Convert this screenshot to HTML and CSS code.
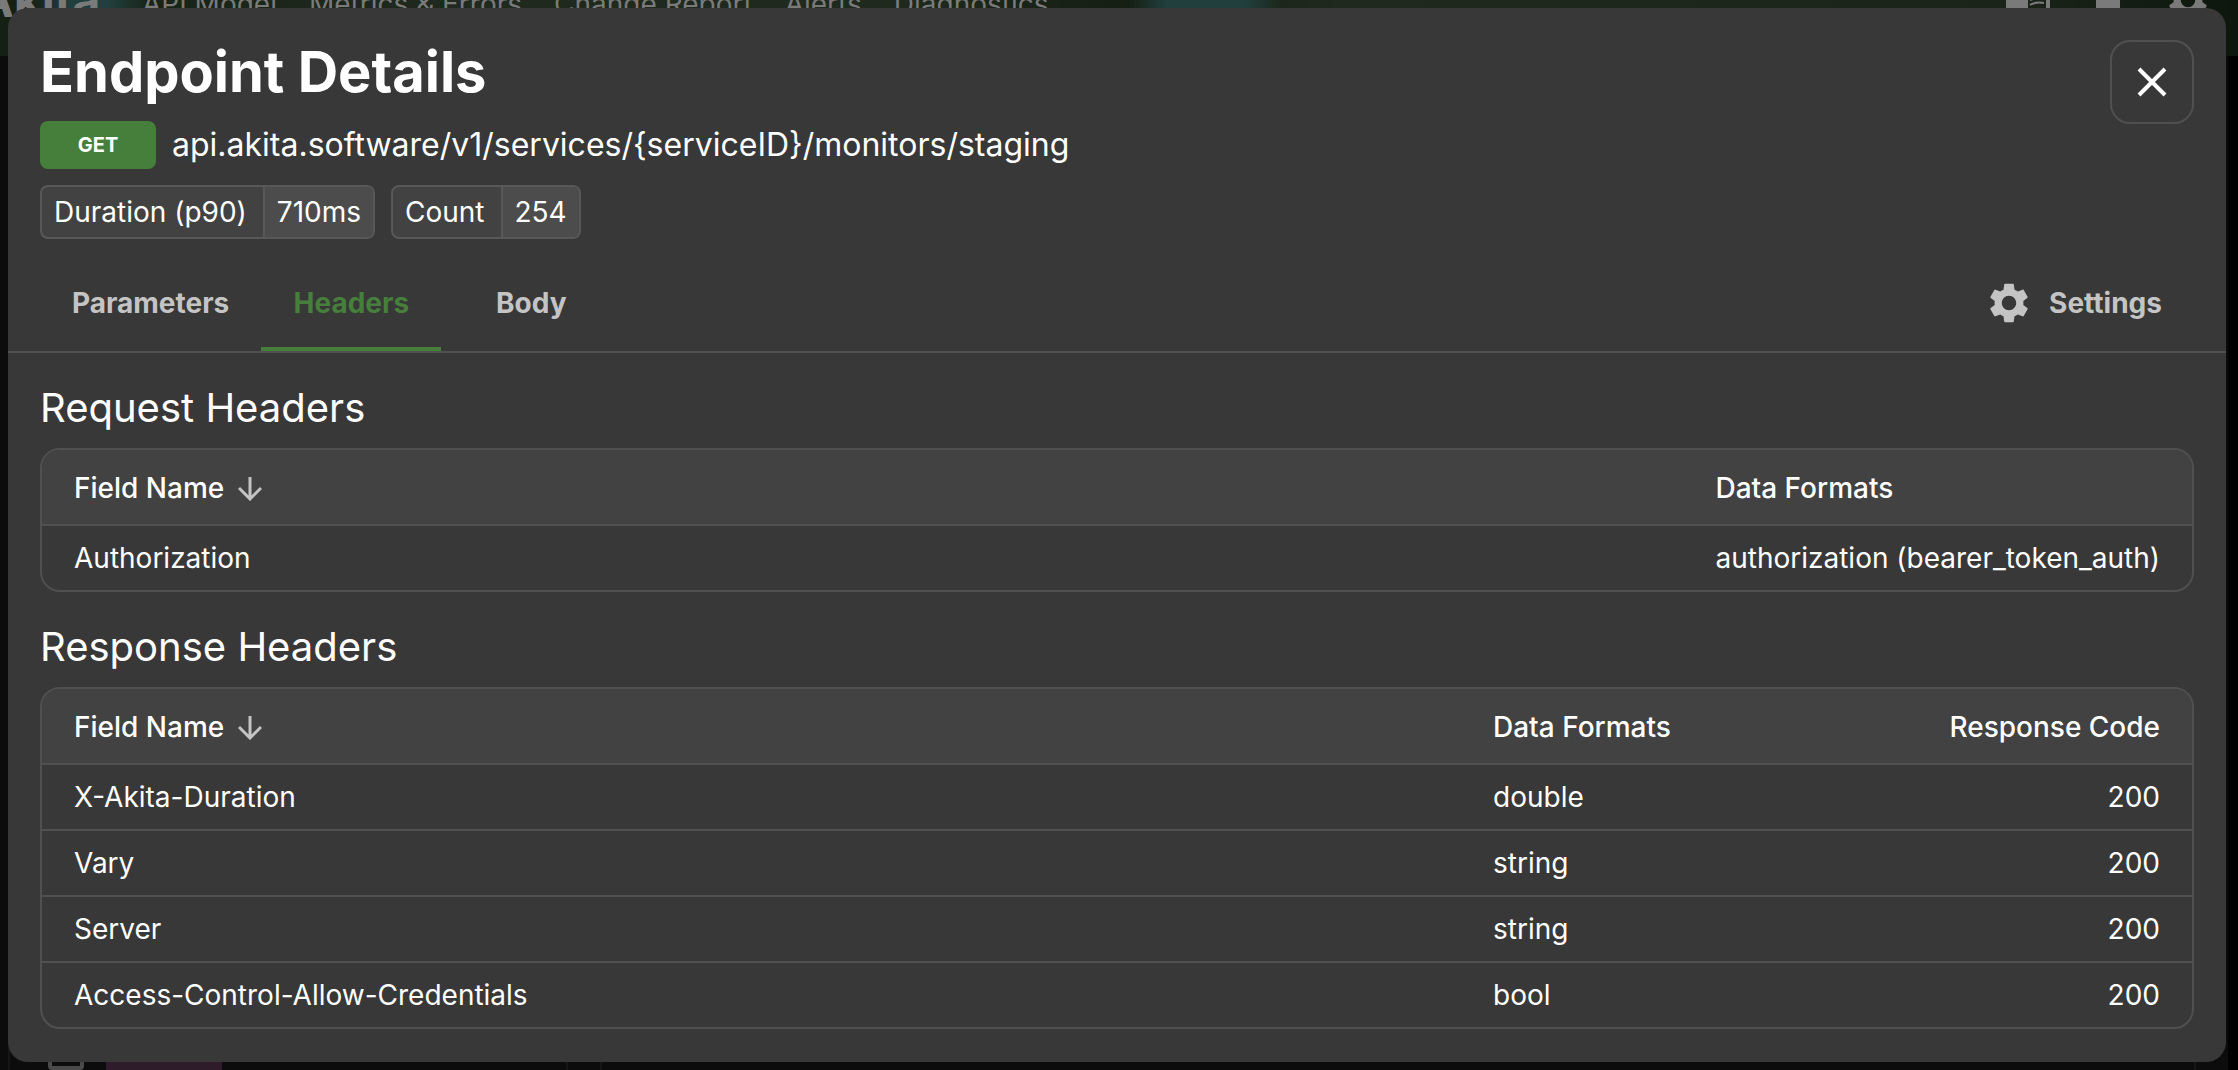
FILE: index.html
```
<!DOCTYPE html>
<html lang="en">

<head>
    <meta charset="UTF-8">
    <meta name="viewport" content="width=device-width, initial-scale=1.0">
    <title>Endpoint Details</title>
    <link rel="stylesheet" href="styles.css">
</head>

<body>
    <!-- page behind the dialog -->
    <div class="page">
        <header class="topbar">
            <span class="logo">Akita</span>
            <nav class="nav">
                <a href="#">API Model</a>
                <a href="#">Metrics &amp; Errors</a>
                <a href="#">Change Report</a>
                <a href="#">Alerts</a>
                <a href="#">Diagnostics</a>
            </nav>
            <div class="tools">
                <svg class="tool" viewBox="0 0 48 48"><path d="M2 8h22v32H2zM26 8h14v12H26zM42 8h4v32h-4z"/><path class="page-lines" d="M26 24c5-2 9-2 14-1M26 29c5-3 9-3 14-2"/></svg>
                <svg class="tool" viewBox="0 0 48 48"><path d="M12 6h24v36H12z"/></svg>
                <svg class="tool" viewBox="0 0 24 24"><path d="M19.14 12.94c.04-.3.06-.61.06-.94 0-.32-.02-.64-.07-.94l2.03-1.58c.18-.14.23-.41.12-.61l-1.92-3.32c-.12-.22-.37-.29-.59-.22l-2.39.96c-.5-.38-1.03-.7-1.62-.94l-.36-2.54c-.04-.24-.24-.41-.48-.41h-3.84c-.24 0-.43.17-.47.41l-.36 2.54c-.59.24-1.13.57-1.62.94l-2.39-.96c-.22-.08-.47 0-.59.22L2.74 8.87c-.12.21-.08.47.12.61l2.03 1.58c-.05.3-.09.63-.09.94s.02.64.07.94l-2.03 1.58c-.18.14-.23.41-.12.61l1.92 3.32c.12.22.37.29.59.22l2.39-.96c.5.38 1.03.7 1.62.94l.36 2.54c.05.24.24.41.48.41h3.84c.24 0 .44-.17.47-.41l.36-2.54c.59-.24 1.13-.56 1.62-.94l2.39.96c.22.08.47 0 .59-.22l1.92-3.32c.12-.22.07-.47-.12-.61l-2.01-1.58zM12 15.6c-1.98 0-3.6-1.62-3.6-3.6s1.62-3.6 3.6-3.6 3.6 1.62 3.6 3.6-1.62 3.6-3.6 3.6z"/></svg>
            </div>
        </header>
        <div class="list">
            <div class="filters">
                <span class="check"></span>
                <span class="method"></span>
            </div>
            <div class="results"></div>
        </div>
    </div>

    <div class="overlay">
        <main class="dialog">
            <div class="head">
                <div class="info">
                    <h1>Endpoint Details</h1>
                    <div class="endpoint">
                        <span class="badge">GET</span>
                        <span class="url">api.akita.software/v1/services/{serviceID}/monitors/staging</span>
                    </div>
                    <div class="chips">
                        <div class="chip"><span class="key">Duration (p90)</span><span class="value">710ms</span></div>
                        <div class="chip"><span class="key">Count</span><span class="value">254</span></div>
                    </div>
                </div>
                <button class="close" type="button" aria-label="Close">
                    <svg viewBox="0 0 48 48"><path d="M11 11l26 26M37 11L11 37"/></svg>
                </button>
            </div>

            <div class="tabs">
                <button class="tab" type="button">Parameters</button>
                <button class="tab active" type="button">Headers</button>
                <button class="tab" type="button">Body</button>
                <button class="tab settings" type="button">
                    <svg viewBox="0 0 24 24"><path d="M19.14 12.94c.04-.3.06-.61.06-.94 0-.32-.02-.64-.07-.94l2.03-1.58c.18-.14.23-.41.12-.61l-1.92-3.32c-.12-.22-.37-.29-.59-.22l-2.39.96c-.5-.38-1.03-.7-1.62-.94l-.36-2.54c-.04-.24-.24-.41-.48-.41h-3.84c-.24 0-.43.17-.47.41l-.36 2.54c-.59.24-1.13.57-1.62.94l-2.39-.96c-.22-.08-.47 0-.59.22L2.74 8.87c-.12.21-.08.47.12.61l2.03 1.58c-.05.3-.09.63-.09.94s.02.64.07.94l-2.03 1.58c-.18.14-.23.41-.12.61l1.92 3.32c.12.22.37.29.59.22l2.39-.96c.5.38 1.03.7 1.62.94l.36 2.54c.05.24.24.41.48.41h3.84c.24 0 .44-.17.47-.41l.36-2.54c.59-.24 1.13-.56 1.62-.94l2.39.96c.22.08.47 0 .59-.22l1.92-3.32c.12-.22.07-.47-.12-.61l-2.01-1.58zM12 15.6c-1.98 0-3.6-1.62-3.6-3.6s1.62-3.6 3.6-3.6 3.6 1.62 3.6 3.6-1.62 3.6-3.6 3.6z"/></svg>
                    Settings
                </button>
            </div>

            <section class="block">
                <h2>Request Headers</h2>
                <div class="table-box">
                    <table class="request">
                        <thead>
                            <tr>
                                <th class="name">Field Name<svg class="sort" viewBox="0 0 24 24"><path d="M12 0v22M1 11l11 11 11-11"/></svg></th>
                                <th>Data Formats</th>
                            </tr>
                        </thead>
                        <tbody>
                            <tr>
                                <td>Authorization</td>
                                <td>authorization (bearer_token_auth)</td>
                            </tr>
                        </tbody>
                    </table>
                </div>
            </section>

            <section class="block">
                <h2>Response Headers</h2>
                <div class="table-box">
                    <table class="response">
                        <thead>
                            <tr>
                                <th class="name">Field Name<svg class="sort" viewBox="0 0 24 24"><path d="M12 0v22M1 11l11 11 11-11"/></svg></th>
                                <th>Data Formats</th>
                                <th class="code">Response Code</th>
                            </tr>
                        </thead>
                        <tbody>
                            <tr>
                                <td>X-Akita-Duration</td>
                                <td>double</td>
                                <td class="code">200</td>
                            </tr>
                            <tr>
                                <td>Vary</td>
                                <td>string</td>
                                <td class="code">200</td>
                            </tr>
                            <tr>
                                <td>Server</td>
                                <td>string</td>
                                <td class="code">200</td>
                            </tr>
                            <tr>
                                <td>Access-Control-Allow-Credentials</td>
                                <td>bool</td>
                                <td class="code">200</td>
                            </tr>
                        </tbody>
                    </table>
                </div>
            </section>
        </main>
    </div>
</body>

</html>
```

FILE: styles.css
```
* {
    margin: 0;
    padding: 0;
    box-sizing: border-box;
}

html,
body {
    height: 100%;
}

body {
    overflow: hidden;
    background: #000;
    color: #fff;
    font-family: Inter, "Liberation Sans", sans-serif;
    font-size: 28px;
    line-height: 40px;
}

button {
    border: none;
    background: none;
    color: inherit;
    font: inherit;
    cursor: pointer;
}

/* page behind */
.page {
    position: absolute;
    inset: 0;
    display: flex;
    flex-direction: column;
    overflow: hidden;
}

.topbar {
    display: flex;
    align-items: center;
    flex-shrink: 0;
    height: 112px;
    margin-top: -56px;
    padding-right: 26px;
    background:
        radial-gradient(circle at 90px 56px, #213f3c 20px, transparent 60px),
        radial-gradient(circle at 1206px 56px, #213f3c 40px, transparent 76px),
        linear-gradient(90deg, #152015, #1f291e 20%, #1f291e 40%, #151f13 50%, #1f291e 60%, #1a2419 90%, #0e170d);
    color: #7a7a7a;
}

.logo {
    width: 164px;
    margin-left: -22px;
    font-size: 48px;
    font-weight: 700;
}

.nav {
    display: flex;
    gap: 32px;
    padding-top: 8px;
}

.nav a {
    color: inherit;
    text-decoration: none;
}

.tools {
    display: flex;
    gap: 32px;
    margin-left: auto;
}

.tool {
    width: 48px;
    height: 48px;
    fill: currentColor;
}

.page-lines {
    fill: none;
    stroke: currentColor;
    stroke-width: 2;
}

.list {
    display: flex;
    gap: 32px;
    flex: 1;
    margin-right: 10px;
    padding: 0 32px 0 8px;
    background: #0c0c0c;
}

.filters {
    display: flex;
    gap: 22px;
    align-items: flex-end;
    width: 560px;
    padding-left: 38px;
    border: solid #161616;
    border-width: 0 2px;
}

.results {
    flex: 1;
    border: solid #161616;
    border-width: 0 2px;
}

.check {
    width: 36px;
    height: 36px;
    border: 4px solid #4a4a4a;
    border-radius: 4px;
}

.method {
    width: 116px;
    height: 48px;
    background: #2f1c2a;
}

/* dialog */
.overlay {
    position: absolute;
    inset: 0;
    display: flex;
    padding: 8px 12px 8px 8px;
}

.dialog {
    flex: 1;
    border-radius: 20px;
    background: #383838;
}

.head {
    display: flex;
    justify-content: space-between;
    align-items: flex-start;
    padding: 32px 32px 16px;
}

h1 {
    font-size: 56px;
    line-height: 64px;
    font-weight: 700;
}

.endpoint {
    display: flex;
    align-items: center;
    gap: 16px;
    margin-top: 17px;
}

.badge {
    width: 116px;
    border-radius: 8px;
    background: #467f3b;
    font-size: 20px;
    line-height: 48px;
    font-weight: 700;
    text-align: center;
}

.url {
    font-size: 32px;
}

.chips {
    display: flex;
    gap: 16px;
    margin-top: 16px;
}

.chip {
    display: flex;
    overflow: hidden;
    border: 2px solid #585858;
    border-radius: 8px;
    background: #424242;
    line-height: 50px;
}

.key {
    padding: 0 16px 0 12px;
}

.value {
    padding: 0 12px;
    border-left: 2px solid #585858;
    background: #4c4c4c;
}

.close {
    display: flex;
    align-items: center;
    justify-content: center;
    width: 84px;
    height: 84px;
    border: 2px solid #505050;
    border-radius: 20px;
}

.close svg {
    width: 48px;
    height: 48px;
    stroke: #fff;
    stroke-width: 4;
}

.tabs {
    display: flex;
    padding: 0 32px;
    border-bottom: 2px solid #505050;
}

.tab {
    min-width: 180px;
    height: 96px;
    padding: 4px 32px 0;
    border-bottom: 4px solid transparent;
    color: #c4c4c4;
    font-weight: 700;
}

.tab.active {
    border-color: #467f3b;
    color: #467f3b;
}

.settings {
    display: flex;
    align-items: center;
    gap: 16px;
    margin-left: auto;
}

.settings svg {
    width: 48px;
    height: 48px;
    fill: currentColor;
}

/* header tables */
.block {
    padding: 31px 32px 0;
}

h2 {
    font-size: 40px;
    line-height: 48px;
    font-weight: 400;
}

.table-box {
    margin-top: 16px;
    overflow: hidden;
    border: 2px solid #505050;
    border-radius: 20px;
}

table {
    width: 100%;
    border-collapse: separate;
    border-spacing: 0;
}

th,
td {
    height: 66px;
    padding: 0 32px;
    border-top: 2px solid #505050;
    text-align: left;
    white-space: nowrap;
}

th {
    height: 74px;
    padding-top: 2px;
    border-top: none;
    background: #424242;
    font-weight: 500;
}

.request .name {
    width: 100%;
}

.response .name {
    width: 66%;
}

.code {
    text-align: right;
}

.sort {
    width: 24px;
    height: 24px;
    margin-left: 14px;
    vertical-align: -3px;
    fill: none;
    stroke: #c4c4c4;
    stroke-width: 3;
}
```
